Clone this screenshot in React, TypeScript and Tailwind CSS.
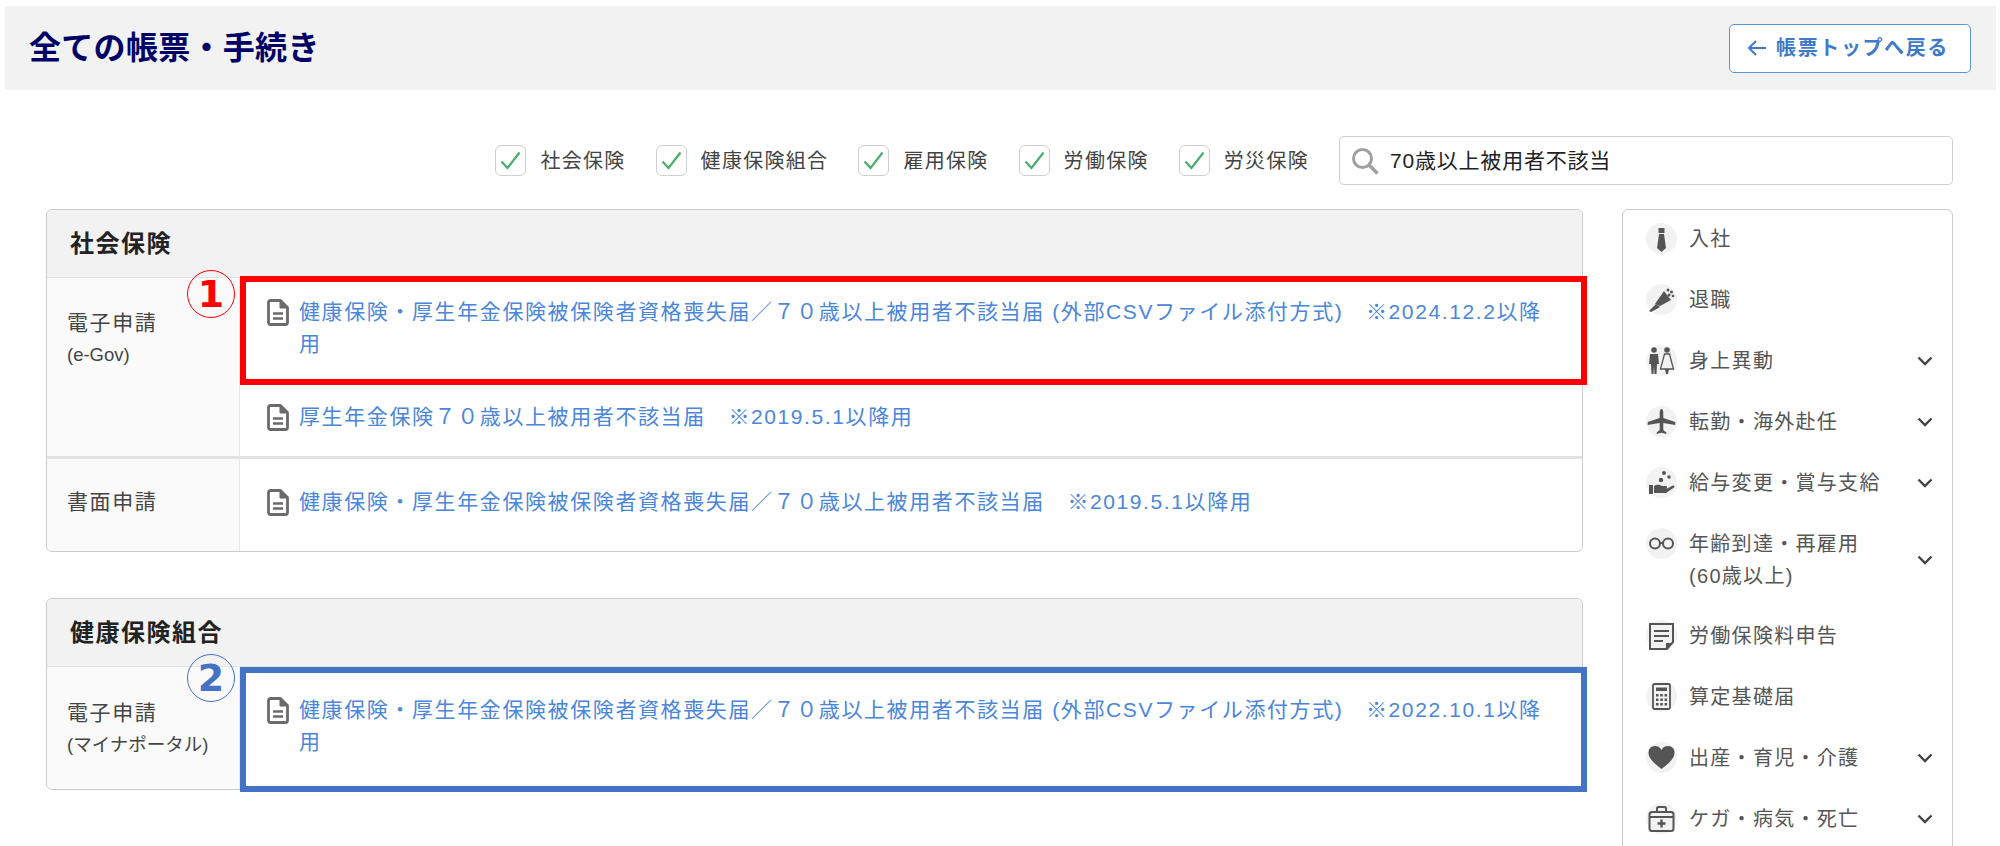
import * as React from "react";

const FONT = "[font-family:'Liberation_Sans','Noto_Sans_CJK_JP',sans-serif]";

function DocIcon() {
  return (
    <svg width="22" height="27" viewBox="0 0 22 27" className="shrink-0" fill="none" stroke="#6b6b6b" strokeWidth="2.8" strokeLinejoin="round">
      <path d="M3.5 1.5h10l7 7v15a2 2 0 0 1-2 2h-15a2 2 0 0 1-2-2v-20a2 2 0 0 1 2-2z" />
      <path d="M13 1.500v7.500h7.500" fill="#6b6b6b" strokeWidth="1" />
      <path d="M6 14.500h10M6 19.500h10" strokeWidth="2.4" />
    </svg>
  );
}

function Check({ label }: { label: string }) {
  return (
    <div className="flex items-center gap-[14px]">
      <div className="flex h-[31px] w-[31px] items-center justify-center rounded-[6px] border border-[#cfcfcf] bg-white">
        <svg width="21" height="19" viewBox="0 0 21 19" fill="none" stroke="#4cae6b" strokeWidth="2.200">
          <path d="M1.500 10.500l6 6.500L19.500 1.500" />
        </svg>
      </div>
      <span className="text-[20px] tracking-[1.3px] text-[#444]">{label}</span>
    </div>
  );
}

function LinkItem({ text, pt, pb }: { text: string; pt: string; pb: string }) {
  return (
    <a className={`flex gap-[10px] pl-[27px] pr-[26px] ${pt} ${pb} text-[21px] leading-[32px] tracking-[1.6px] text-[#4a86d9]`}>
      <span className="mt-[3px]">
        <DocIcon />
      </span>
      <span>{text}</span>
    </a>
  );
}

const LONG = "健康保険・厚生年金保険被保険者資格喪失届／７０歳以上被用者不該当届 (外部CSVファイル添付方式)　※";

type Row = { label: string; chevron?: boolean; icon: React.ReactNode };

const navRows: Row[] = [
  {
    label: "入社",
    icon: <path d="M12.500 5h6v5h-6zM13 11h5l2 14-4.500 4-4.500-4z" />,
  },
  {
    label: "退職",
    icon: (
      <>
        <path d="M9 20l9-13 7 9-11 6z" />
        <path d="M3 27l2-2 5-5 4 3-7 4-2 1z" />
        <circle cx="22" cy="6" r="1.500" />
        <circle cx="25.500" cy="8" r="1.500" />
        <circle cx="27" cy="12" r="1.300" />
        <circle cx="23" cy="11" r="1.500" />
      </>
    ),
  },
  {
    label: "身上異動",
    chevron: true,
    icon: (
      <>
        <circle cx="8" cy="5" r="2.800" />
        <path d="M4 9h8l1 10h-2l-.5 10H8.500L8 21l-.500 8H5.500L5 19H3z" />
        <circle cx="21" cy="5" r="2.800" />
        <path d="M18.500 9h5l4 15h-13z" fill="none" stroke="#555" strokeWidth="1.300" />
        <path d="M19 24h4l-1 5h-2z" />
      </>
    ),
  },
  {
    label: "転勤・海外赴任",
    chevron: true,
    icon: <path d="M15.500 3c1.200 0 1.800 2 1.800 4v5l12 4v3l-12-2v7l3 2.500V28l-4.800-1.200L10.700 28v-1.500l3-2.500v-7l-12 2v-3l12-4V7c0-2 .6-4 1.800-4z" />,
  },
  {
    label: "給与変更・賞与支給",
    chevron: true,
    icon: (
      <>
        <circle cx="18" cy="6" r="2" />
        <circle cx="23" cy="10" r="1.700" />
        <circle cx="15" cy="13" r="2.200" />
        <path d="M3 18h4v9H3z" />
        <path d="M8 19c3-2 6-1 8 0h4c1.500 0 1.500 2.500 0 2.500h-4 5l6-3c1.500-.5 2 1 1 2l-8 5.500H8z" />
      </>
    ),
  },
  {
    label: "年齢到達・再雇用\n(60歳以上)",
    chevron: true,
    icon: (
      <>
        <circle cx="9" cy="15.500" r="5" fill="none" stroke="#555" strokeWidth="2" />
        <circle cx="22" cy="15.500" r="5" fill="none" stroke="#555" strokeWidth="2" />
        <path d="M14 15h3" stroke="#555" strokeWidth="2" />
      </>
    ),
  },
  {
    label: "労働保険料申告",
    icon: (
      <>
        <path d="M4 4h23v18l-6 7H4z" fill="none" stroke="#555" strokeWidth="2" />
        <path d="M8 10h15v2H8zM8 15h15v2H8zM8 20h9v2H8z" />
        <path d="M20 29v-6h7z" />
      </>
    ),
  },
  {
    label: "算定基礎届",
    icon: (
      <>
        <rect x="7" y="3" width="17" height="25" rx="1.500" fill="none" stroke="#555" strokeWidth="1.800" />
        <path d="M10 6.500h11v3.500H10z" />
        <path d="M10 13h2.500v2.500H10zM14.300 13h2.500v2.500h-2.500zM18.600 13h2.500v2.500h-2.500zM10 17.500h2.500V20H10zM14.300 17.500h2.500V20h-2.500zM18.600 17.500h2.500V20h-2.500zM10 22h2.500v2.500H10zM14.300 22h2.500v2.500h-2.500zM18.600 22h2.500v2.500h-2.500z" />
      </>
    ),
  },
  {
    label: "出産・育児・介護",
    chevron: true,
    icon: <path d="M15.500 27C9 22 2.500 17 2.500 10.500 2.500 6 6 4 9 4c3 0 5.300 1.600 6.500 4C16.700 5.600 19 4 22 4c3 0 6.500 2 6.500 6.500C28.500 17 22 22 15.500 27z" />,
  },
  {
    label: "ケガ・病気・死亡",
    chevron: true,
    icon: (
      <>
        <rect x="3.500" y="9" width="24" height="19" rx="2.500" fill="none" stroke="#555" strokeWidth="2" />
        <path d="M11 9V5.500a1.500 1.500 0 0 1 1.500-1.500h6A1.500 1.500 0 0 1 20 5.500V9M3.500 14h24" fill="none" stroke="#555" strokeWidth="2" />
        <path d="M14.300 16.500h2.400v2.800h2.800v2.400h-2.800v2.800h-2.400v-2.800h-2.800v-2.400h2.800z" />
      </>
    ),
  },
];

function NavRow({ row }: { row: Row }) {
  const lines = row.label.split("\n");
  return (
    <div className={`flex items-start pl-[23px] pr-[19px] ${lines.length > 1 ? "pb-[28px]" : "pb-[29px]"}`}>
      <div className="h-[31px] w-[31px] shrink-0 rounded-full bg-[#f2f2f2]">
        <svg width="31" height="31" viewBox="0 0 31 31" fill="#555">
          {row.icon}
        </svg>
      </div>
      <div className="ml-[12px] flex-1 text-[20px] leading-[32px] tracking-[1.3px] text-[#555]">
        {lines.map((l) => (
          <div key={l}>{l}</div>
        ))}
      </div>
      {row.chevron && (
        <svg width="16" height="10" viewBox="0 0 16 10" fill="none" stroke="#444" strokeWidth="2.400" className="self-center">
          <path d="M1.500 1.500L8 8l6.500-6.500" />
        </svg>
      )}
    </div>
  );
}

export default function App() {
  return (
    <div className={`h-[846px] overflow-hidden bg-white pt-[6px] ${FONT}`}>
      <div className="ml-[5px] mr-[4px] flex h-[84px] items-center justify-between bg-[#f2f2f2] pl-[24px] pr-[25px]">
        <h1 className="text-[32px] font-bold tracking-[0.3px] text-[#000066]">全ての帳票・手続き</h1>
        <button className="flex h-[49px] w-[242px] items-center justify-center gap-[9px] rounded-[5px] border border-[#5b94d8] bg-white pr-[4px] text-[20px] font-bold tracking-[1.6px] text-[#3f7ac8]">
          <svg width="20" height="20" viewBox="0 0 20 20" fill="none" stroke="#3f7ac8" strokeWidth="2">
            <path d="M19 10H2M9 3l-7 7 7 7" />
          </svg>
          帳票トップへ戻る
        </button>
      </div>

      <div className="pl-[46px] pr-[47px]">
        <div className="mt-[46px] flex items-center justify-end gap-[30px]">
          <Check label="社会保険" />
          <Check label="健康保険組合" />
          <Check label="雇用保険" />
          <Check label="労働保険" />
          <Check label="労災保険" />
          <div className="flex h-[49px] w-[614px] items-center gap-[11px] rounded-[5px] border border-[#cfcfcf] bg-white pl-[11px] text-[21px] tracking-[0.8px] text-[#222]">
            <svg width="28" height="28" viewBox="0 0 28 28" fill="none" stroke="#a0a0a0" strokeWidth="3">
              <circle cx="11.500" cy="11.500" r="9" />
              <path d="M18 18l8.500 8.500" strokeWidth="3.500" />
            </svg>
            70歳以上被用者不該当
          </div>
        </div>

        <div className="mt-[24px] flex items-start gap-[39px]">
          <div className="flex w-[1537px] flex-col gap-[46px]">
            <section className="rounded-[6px] border border-[#cccccc] bg-white">
              <h2 className="flex h-[68px] items-center rounded-t-[6px] border-b border-[#e3e3e3] bg-[#f2f2f2] pl-[23px] text-[24px] font-bold tracking-[1.5px] text-[#222]">
                社会保険
              </h2>
              <div className="flex border-b-[3px] border-[#e3e3e3]">
                <div className="w-[193px] shrink-0 border-r border-[#e8e8e8] bg-[#fafafa] pl-[20px] pt-[29px] text-[#444]">
                  <div className="text-[21px] leading-[32px] tracking-[1.6px]">電子申請</div>
                  <div className="text-[18.5px] leading-[32px]">(e-Gov)</div>
                </div>
                <div className="flex-1">
                  <div className="relative">
                    <LinkItem text={LONG + "2024.12.2以降用"} pt="pt-[18px]" pb="pb-[22px]" />
                    <div className="absolute bottom-[-3px] left-0 right-[-5px] top-[-2px] border-[6px] border-[#ff0000]">
                      <div className="absolute left-[-59px] top-[-12px] flex h-[48px] w-[48px] items-center justify-center rounded-full border-[1.5px] border-[#ff0000] text-[38px] font-bold leading-none text-[#ff0000] [font-family:'DejaVu_Sans',sans-serif]">
                        1
                      </div>
                    </div>
                  </div>
                  <LinkItem text="厚生年金保険７０歳以上被用者不該当届　※2019.5.1以降用" pt="pt-[19px]" pb="pb-[23px]" />
                </div>
              </div>
              <div className="flex">
                <div className="w-[193px] shrink-0 rounded-bl-[6px] border-r border-[#e8e8e8] bg-[#fafafa] pl-[20px] pt-[27px] text-[21px] leading-[32px] tracking-[1.6px] text-[#444]">
                  書面申請
                </div>
                <div className="flex-1">
                  <LinkItem text="健康保険・厚生年金保険被保険者資格喪失届／７０歳以上被用者不該当届　※2019.5.1以降用" pt="pt-[27px]" pb="pb-[33px]" />
                </div>
              </div>
            </section>

            <section className="rounded-[6px] border border-[#cccccc] bg-white">
              <h2 className="flex h-[68px] items-center rounded-t-[6px] border-b border-[#e3e3e3] bg-[#f2f2f2] pl-[23px] text-[24px] font-bold tracking-[1.5px] text-[#222]">
                健康保険組合
              </h2>
              <div className="flex">
                <div className="w-[193px] shrink-0 rounded-bl-[6px] border-r border-[#e8e8e8] bg-[#fafafa] pl-[20px] pt-[30px] text-[#444]">
                  <div className="text-[21px] leading-[32px] tracking-[1.6px]">電子申請</div>
                  <div className="text-[18.5px] leading-[32px]">(マイナポータル)</div>
                </div>
                <div className="relative flex-1">
                  <LinkItem text={LONG + "2022.10.1以降用"} pt="pt-[27px]" pb="pb-[31px]" />
                  <div className="absolute bottom-[-3px] left-0 right-[-5px] top-0 border-[6px] border-[#4472c4]">
                    <div className="absolute left-[-59px] top-[-19px] flex h-[48px] w-[48px] items-center justify-center rounded-full border-[1.5px] border-[#4472c4] text-[38px] font-bold leading-none text-[#4472c4] [font-family:'DejaVu_Sans',sans-serif]">
                      2
                    </div>
                  </div>
                </div>
              </div>
            </section>
          </div>

          <aside className="h-[700px] flex-1 rounded-[6px] border border-[#cccccc] bg-white pt-[13px]">
            {navRows.map((row) => (
              <NavRow key={row.label} row={row} />
            ))}
          </aside>
        </div>
      </div>
    </div>
  );
}
